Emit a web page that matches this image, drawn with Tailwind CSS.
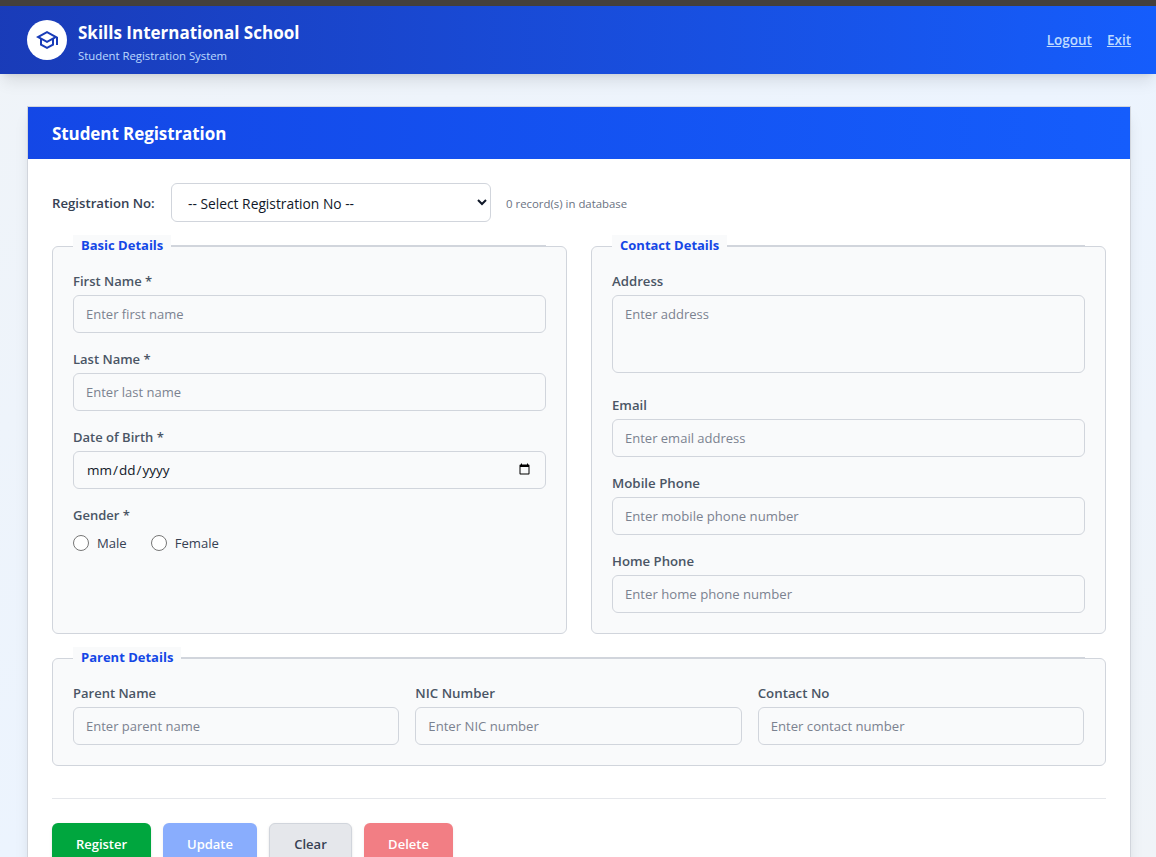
<!DOCTYPE html>
<html lang="en">
<head>
    <meta charset="UTF-8">
    <meta name="viewport" content="width=device-width, initial-scale=1.0">
    <title>Student Registration</title>
    <script src="https://cdn.jsdelivr.net/npm/@tailwindcss/browser@4"></script>
</head>
<body class="h-screen overflow-hidden bg-linear-to-br from-[#f0f4f8] via-[#ecf4fe] to-[#f0f4f8] font-['Segoe_UI','Open_Sans',sans-serif] text-[13px] leading-5 text-gray-900">
    <div class="h-1.5 bg-[#44403c]"></div>

    <!-- Header -->
    <header class="relative h-[68px] pl-[27px] pr-[25px] flex items-center justify-between bg-linear-to-r from-blue-800 to-[#155dfc] shadow-lg">
        <div class="flex items-center gap-[11px]">
            <div class="w-10 h-10 rounded-full bg-white flex items-center justify-center">
                <svg class="w-6 h-6 text-blue-800" viewBox="0 0 24 24" fill="currentColor">
                    <path d="M12 3 1 9l4 2.18v6L12 21l7-3.82v-6l2-1.09V17h2V9L12 3zm6.82 6L12 12.72 5.18 9 12 5.28 18.82 9zM17 15.99l-5 2.73-5-2.73v-3.72L12 15l5-2.73v3.72z"/>
                </svg>
            </div>
            <div class="pt-[5px]">
                <h1 class="text-[17px] leading-[26px] font-bold text-white">Skills International School</h1>
                <p class="text-[11.35px] leading-[19px] text-blue-200">Student Registration System</p>
            </div>
        </div>
        <nav class="flex gap-[15px] pb-px text-[13.5px] font-semibold text-blue-200">
            <a href="#" class="underline">Logout</a>
            <a href="#" class="underline">Exit</a>
        </nav>
    </header>

    <!-- Registration card -->
    <main class="mt-8 ml-[27px] mr-[25px] h-[900px] bg-white border border-gray-300 shadow-lg">
        <div class="h-[52px] px-6 pt-0.5 flex items-center bg-linear-to-r from-blue-700 to-[#155dfc]">
            <h2 class="text-[17px] font-bold tracking-[-0.08px] text-white">Student Registration</h2>
        </div>

        <form class="p-6">
            <div class="flex items-center mb-6">
                <label class="w-[119px] text-[13.2px] font-semibold text-gray-700">Registration No:</label>
                <select class="w-80 h-[39px] px-3 pt-px text-[13.8px] bg-white border border-gray-300 rounded-md">
                    <option>-- Select Registration No --</option>
                </select>
                <span class="ml-[15px] pt-0.5 text-[11.4px] text-gray-500">0 record(s) in database</span>
            </div>

            <div class="grid grid-cols-2 gap-6">
                <!-- Basic details -->
                <section class="h-[388px] px-5 bg-gray-50 border border-gray-300 rounded-md">
                    <div class="-mt-3 mb-3.5 flex items-center">
                        <h3 class="px-2 pb-0.5 font-bold text-blue-700 bg-gray-50">Basic Details</h3>
                        <div class="h-0.5 flex-1 bg-gray-300"></div>
                    </div>
                    <div class="space-y-4">
                        <div>
                            <label class="block mb-1 font-semibold text-gray-600">First Name *</label>
                            <input type="text" placeholder="Enter first name" class="block w-full h-[38px] px-3 border border-gray-300 rounded-md placeholder:text-[#7b8290]">
                        </div>
                        <div>
                            <label class="block mb-1 font-semibold text-gray-600">Last Name *</label>
                            <input type="text" placeholder="Enter last name" class="block w-full h-[38px] px-3 border border-gray-300 rounded-md placeholder:text-[#7b8290]">
                        </div>
                        <div>
                            <label class="block mb-1 font-semibold text-gray-600">Date of Birth *</label>
                            <input type="date" class="block w-full h-[38px] px-3 text-[13.5px] border border-gray-300 rounded-md">
                        </div>
                        <div>
                            <label class="block mb-1 font-semibold text-gray-600">Gender *</label>
                            <div class="flex gap-6 pt-1 text-[13.1px] text-gray-700">
                                <label class="flex items-center gap-2"><input type="radio" name="gender" class="w-4 h-4">Male</label>
                                <label class="flex items-center gap-2"><input type="radio" name="gender" class="w-4 h-4">Female</label>
                            </div>
                        </div>
                    </div>
                </section>

                <!-- Contact details -->
                <section class="h-[388px] px-5 bg-gray-50 border border-gray-300 rounded-md">
                    <div class="-mt-3 mb-3.5 flex items-center">
                        <h3 class="px-2 pb-0.5 font-bold text-blue-700 bg-gray-50">Contact Details</h3>
                        <div class="h-0.5 flex-1 bg-gray-300"></div>
                    </div>
                    <div class="space-y-4">
                        <div class="pb-1.5">
                            <label class="block mb-1 text-[13.2px] font-semibold text-gray-600">Address</label>
                            <textarea placeholder="Enter address" class="block w-full h-[78px] px-3 py-2 border border-gray-300 rounded-md resize-none placeholder:text-[#7b8290]"></textarea>
                        </div>
                        <div>
                            <label class="block mb-1 text-[13.2px] font-semibold text-gray-600">Email</label>
                            <input type="email" placeholder="Enter email address" class="block w-full h-[38px] px-3 border border-gray-300 rounded-md placeholder:text-[#7b8290]">
                        </div>
                        <div>
                            <label class="block mb-1 text-[13.3px] font-semibold text-gray-600">Mobile Phone</label>
                            <input type="tel" placeholder="Enter mobile phone number" class="block w-full h-[38px] px-3 text-[13.15px] border border-gray-300 rounded-md placeholder:text-[#7b8290]">
                        </div>
                        <div>
                            <label class="block mb-1 text-[13.2px] font-semibold text-gray-600">Home Phone</label>
                            <input type="tel" placeholder="Enter home phone number" class="block w-full h-[38px] px-3 text-[13.15px] border border-gray-300 rounded-md placeholder:text-[#7b8290]">
                        </div>
                    </div>
                </section>
            </div>

            <!-- Parent details -->
            <section class="mt-6 h-[108px] px-5 bg-gray-50 border border-gray-300 rounded-md">
                <div class="-mt-3 mb-3.5 flex items-center">
                    <h3 class="px-2 pb-0.5 font-bold text-blue-700 bg-gray-50">Parent Details</h3>
                    <div class="h-0.5 flex-1 bg-gray-300"></div>
                </div>
                <div class="mr-px grid grid-cols-3 gap-4">
                    <div>
                        <label class="block mb-1 font-semibold text-gray-600">Parent Name</label>
                        <input type="text" placeholder="Enter parent name" class="block w-full h-[38px] px-3 border border-gray-300 rounded-md placeholder:text-[#7b8290]">
                    </div>
                    <div>
                        <label class="block mb-1 text-[13.3px] font-semibold text-gray-600">NIC Number</label>
                        <input type="text" placeholder="Enter NIC number" class="block w-full h-[38px] px-3 text-[13.15px] border border-gray-300 rounded-md placeholder:text-[#7b8290]">
                    </div>
                    <div>
                        <label class="block mb-1 text-[13.3px] font-semibold text-gray-600">Contact No</label>
                        <input type="tel" placeholder="Enter contact number" class="block w-full h-[38px] px-3 text-[13.15px] border border-gray-300 rounded-md placeholder:text-[#7b8290]">
                    </div>
                </div>
            </section>

            <!-- Actions -->
            <div class="mt-8 pt-6 flex gap-3 border-t border-gray-200 font-semibold">
                <button type="button" class="w-[99px] h-[42px] rounded-md bg-green-600 text-white shadow-sm">Register</button>
                <button type="button" class="w-[94px] h-[42px] rounded-md bg-blue-600 text-white shadow-sm opacity-50" disabled>Update</button>
                <button type="button" class="w-[83px] h-[42px] rounded-md bg-gray-200 border border-gray-300 text-gray-700 shadow-sm">Clear</button>
                <button type="button" class="w-[89px] h-[42px] rounded-md bg-red-600 text-white shadow-sm opacity-50" disabled>Delete</button>
            </div>
        </form>
    </main>
</body>
</html>
